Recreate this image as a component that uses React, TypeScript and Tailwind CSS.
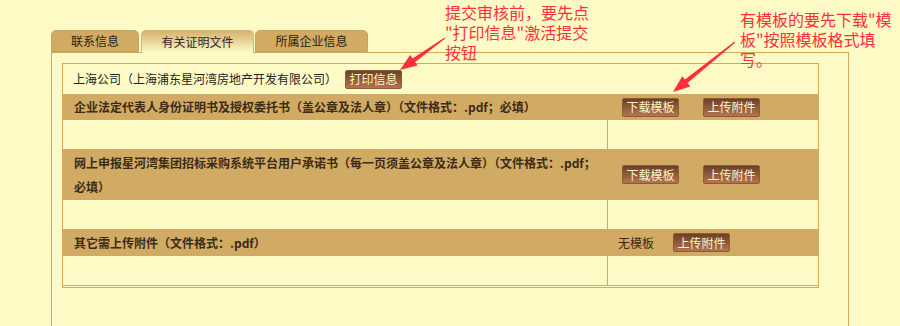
const tabs = [
  { label: "联系信息", width: "w-[88px]", active: false },
  { label: "有关证明文件", width: "w-[113px]", active: true },
  { label: "所属企业信息", width: "w-[113px]", active: false },
];

const BrownButton = ({ children }: { children: React.ReactNode }) => (
  <span className="inline-flex h-[19px] w-[57px] items-center justify-center rounded-[2px] border border-[#8a5a3a] bg-gradient-to-b from-[#6c4124] to-[#b47550] text-[12px] leading-none text-[#fff4cc]">
    {children}
  </span>
);

// flecha roja de anotación, calculada de cola a punta
const Arrow = ({ from, to }: { from: [number, number]; to: [number, number] }) => {
  const [tx, ty] = from;
  const [px, py] = to;
  const len = Math.hypot(px - tx, py - ty);
  const dx = (px - tx) / len;
  const dy = (py - ty) / len;
  const nx = -dy;
  const ny = dx;
  const bx = px - dx * 17;
  const by = py - dy * 17;
  const pts = [
    [tx + nx * 0.6, ty + ny * 0.6],
    [bx + nx * 2.2, by + ny * 2.2],
    [bx + nx * 6.5, by + ny * 6.5],
    [px, py],
    [bx - nx * 6.5, by - ny * 6.5],
    [bx - nx * 2.2, by - ny * 2.2],
    [tx - nx * 0.6, ty - ny * 0.6],
  ]
    .map((p) => `${p[0].toFixed(1)},${p[1].toFixed(1)}`)
    .join(" ");
  return <polygon points={pts} fill="#ff2f3a" />;
};

const HeaderRow = ({
  text,
  height,
  right,
}: {
  text: React.ReactNode;
  height: string;
  right: React.ReactNode;
}) => (
  <div className={`flex ${height} bg-[#d1aa64]`}>
    <div className="flex w-[545px] items-center px-[10px] text-[12px] font-bold leading-6 text-[#3b2c18]">
      <p className="pl-px">{text}</p>
    </div>
    <div className="w-px" />
    <div className="flex flex-1 items-center">{right}</div>
  </div>
);

const BlankRow = () => (
  <div className="flex h-[29px]">
    <div className="w-[545px] border-r border-[#d4a95a]" />
    <div className="flex-1" />
  </div>
);

export default function App() {
  return (
    <div
      className="relative h-[326px] w-[900px] overflow-hidden bg-[#fffbc7] pl-[51px] pt-[30px] text-[#222]"
      style={{ fontFamily: '"Noto Sans CJK SC", "Noto Sans", sans-serif' }}
    >
      {/* Pestañas */}
      <div className="relative z-10 flex h-[22px] items-end">
        {tabs.map((t, i) => (
          <div
            key={t.label}
            className={`flex h-[22px] ${t.width} ${i === 0 ? "" : i === 1 ? "ml-[2px]" : "ml-px"} items-center justify-center rounded-t-[5px] text-[12px] ${
              t.active
                ? "h-[23px] self-start border border-b-0 border-[#d8b672] bg-gradient-to-b from-[#d6b271] to-[#fffbc7] text-[#2a2a2a]"
                : "border border-[#c9a35c] bg-[#d1aa64] text-[#2a1f10]"
            }`}
          >
            {t.label}
          </div>
        ))}
      </div>

      {/* Panel */}
      <div className="h-[300px] w-[798px] border border-b-0 border-[#d4a95a] pl-[10px] pt-[10px]">
        <div className="w-[757px] border border-b-[3px] border-[#d4a95a] [border-bottom-style:double]">
          <div className="flex h-[30px] items-center gap-[8px] px-[10px] text-[12px] text-[#222]">
            <span>上海公司（上海浦东星河湾房地产开发有限公司）</span>
            <BrownButton>打印信息</BrownButton>
          </div>

          <HeaderRow
            height="h-[26px]"
            text="企业法定代表人身份证明书及授权委托书（盖公章及法人章）（文件格式：.pdf；必填）"
            right={
              <div className="flex gap-[24px] pl-[13px]">
                <BrownButton>下载模板</BrownButton>
                <BrownButton>上传附件</BrownButton>
              </div>
            }
          />
          <BlankRow />
          <HeaderRow
            height="h-[51px]"
            text="网上申报星河湾集团招标采购系统平台用户承诺书（每一页须盖公章及法人章）（文件格式：.pdf；必填）"
            right={
              <div className="flex gap-[24px] pl-[13px]">
                <BrownButton>下载模板</BrownButton>
                <BrownButton>上传附件</BrownButton>
              </div>
            }
          />
          <BlankRow />
          <HeaderRow
            height="h-[27px]"
            text="其它需上传附件（文件格式：.pdf）"
            right={
              <div className="flex items-center gap-[19px] pl-[9px]">
                <span className="text-[12px] text-[#3a2a12]">无模板</span>
                <BrownButton>上传附件</BrownButton>
              </div>
            }
          />
          <BlankRow />
        </div>
        <div className="mt-[38px] w-[757px] border-t border-[#d4a95a]" />
      </div>

      {/* Anotaciones */}
      <div className="absolute left-[445px] top-[2px] text-[16px] leading-[20px] text-[#ff2f3a]">
        <p>提交审核前，要先点</p>
        <p>"打印信息"激活提交</p>
        <p>按钮</p>
      </div>
      <div className="absolute left-[740px] top-[9px] text-[16px] leading-[20px] text-[#ff2f3a]">
        <p>有模板的要先下载"模</p>
        <p>板"按照模板格式填</p>
        <p>写。</p>
      </div>
      <svg className="pointer-events-none absolute left-0 top-0" width="900" height="326">
        <Arrow from={[445, 38]} to={[400, 70]} />
        <Arrow from={[735, 42]} to={[673, 92]} />
      </svg>
    </div>
  );
}
